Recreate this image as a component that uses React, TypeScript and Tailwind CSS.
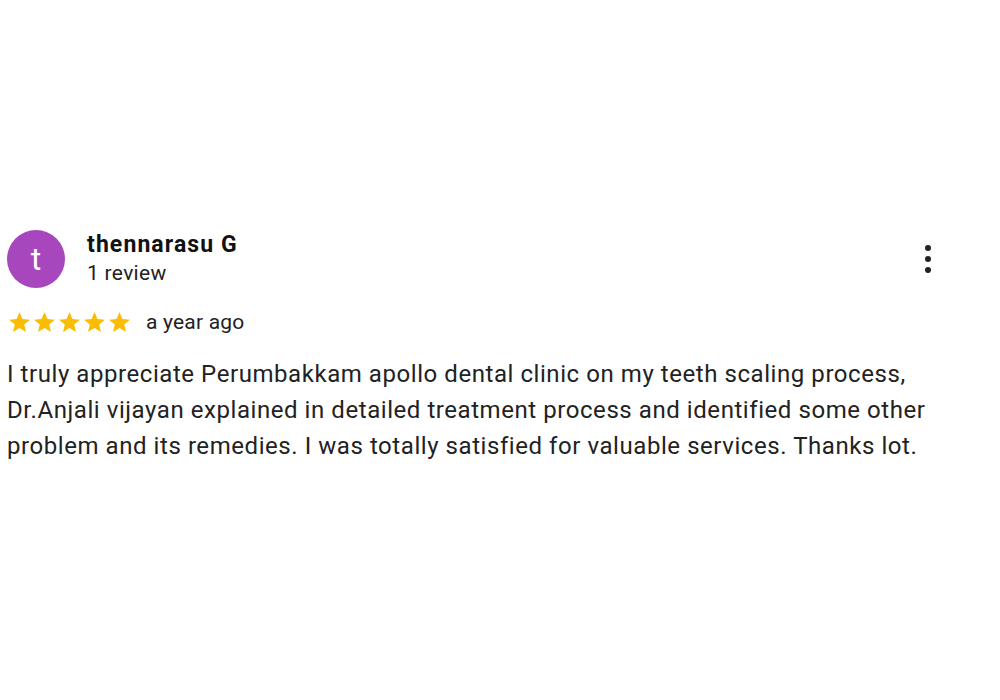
import React from "react";

const Star = () => (
  <svg width="25" height="25" viewBox="0 0 24 24" className="block">
    <path fill="#fbbc04" d="M12 17.27L18.18 21l-1.64-7.03L22 9.24l-7.19-.61L12 2 9.19 8.63 2 9.24l5.46 4.73L5.82 21z" />
  </svg>
);

export default function App() {
  return (
    <div className="w-[1000px] h-[700px] bg-white" style={{ fontFamily: "Roboto, sans-serif" }}>
      <div className="pt-[230px] pl-[7px] pr-[60px]">
        <div className="flex items-center">
          <div className="w-[58px] h-[58px] rounded-full bg-[#a846bd] flex items-center justify-center text-white text-[32px] leading-none">
            t
          </div>
          <div className="ml-[22px] flex flex-col">
            <div className="text-[23px] font-bold text-[#111] leading-[28px] tracking-[1.1px]">thennarasu G</div>
            <div className="text-[21px] text-[#222] leading-[28px] tracking-[0.3px]">1 review</div>
          </div>
          <div className="ml-auto mr-[9px] flex flex-col gap-[5px] items-center">
            <div className="w-[6px] h-[6px] rounded-full bg-[#222]" />
            <div className="w-[6px] h-[6px] rounded-full bg-[#222]" />
            <div className="w-[6px] h-[6px] rounded-full bg-[#222]" />
          </div>
        </div>
        <div className="flex items-center mt-[19px]">
          <div className="flex">
            <Star />
            <Star />
            <Star />
            <Star />
            <Star />
          </div>
          <span className="ml-[14px] text-[21px] text-[#222] tracking-[0.2px]">a year ago</span>
        </div>
        <p className="mt-[17px] text-[24px] leading-[36px] text-[#222] tracking-[0.56px] w-[935px]">
          I truly appreciate Perumbakkam apollo dental clinic on my teeth scaling process,
          <br />
          Dr.Anjali vijayan explained in detailed treatment process and identified some other
          <br />
          problem and its remedies. I was totally satisfied for valuable services. Thanks lot.
        </p>
      </div>
    </div>
  );
}
